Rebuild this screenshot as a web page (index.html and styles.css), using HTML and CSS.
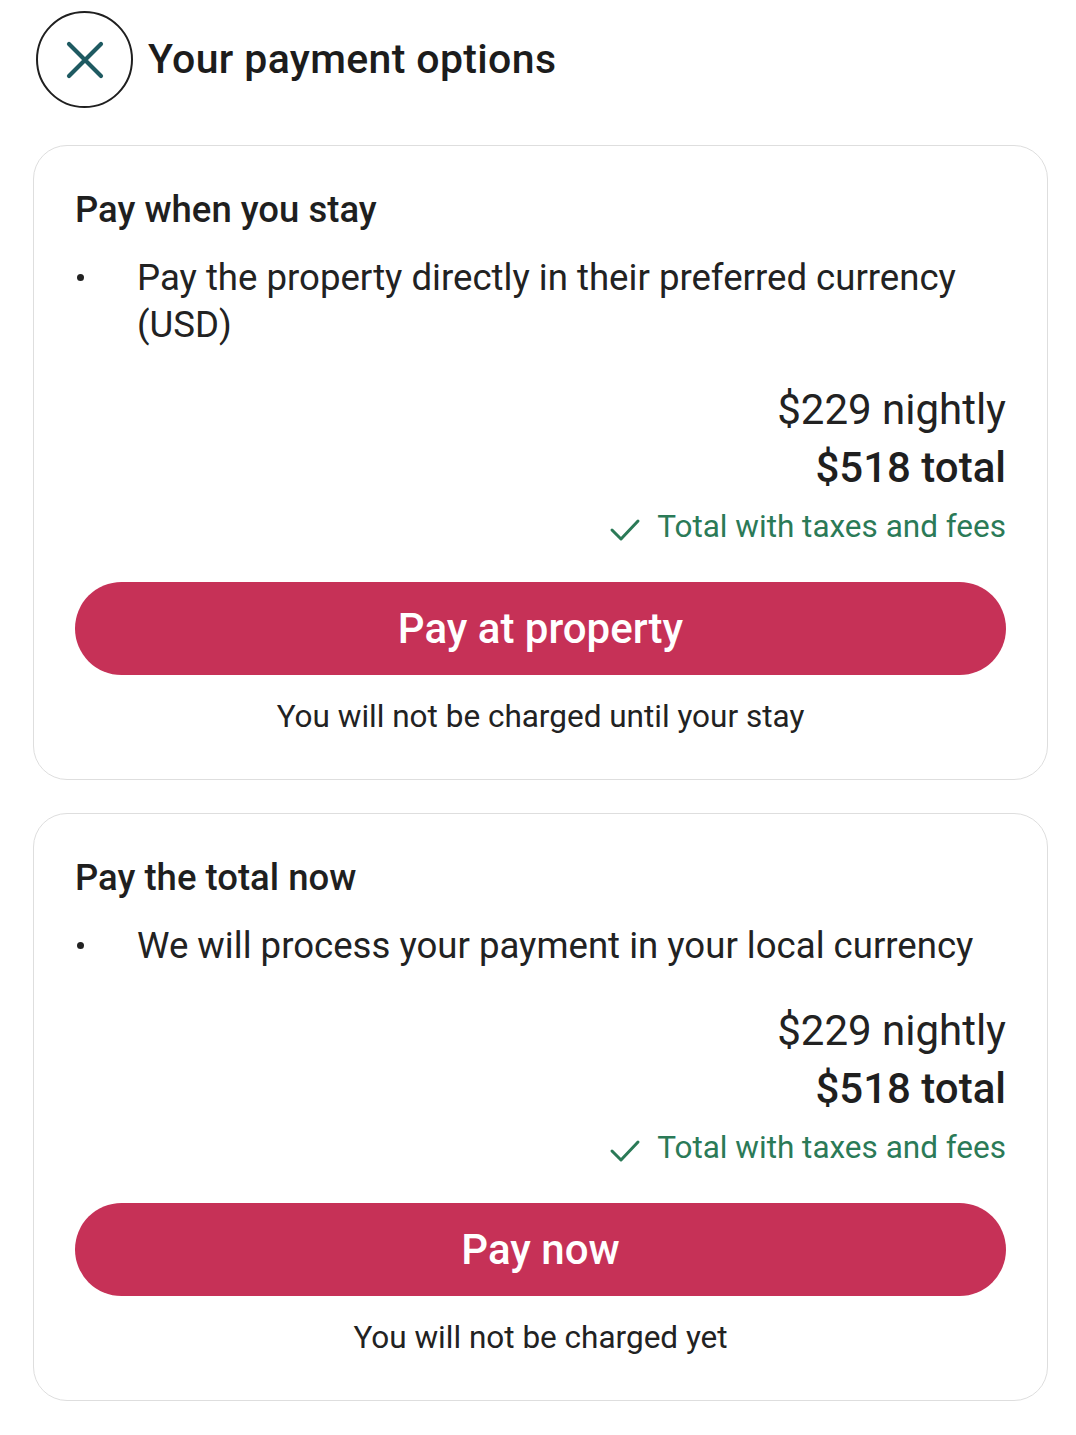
FILE: index.html
```html
<!DOCTYPE html>
<html lang="en">
<head>
  <meta charset="UTF-8" />
  <meta name="viewport" content="width=device-width, initial-scale=1" />
  <title>Your payment options</title>
  <link rel="stylesheet" href="styles.css">
</head>
<body>
  <div class="header">
    <button class="close-btn" aria-label="Close">
      <svg width="40" height="40" viewBox="0 0 40 40">
        <path d="M4 4 L36 36 M36 4 L4 36" stroke="#1e5a61" stroke-width="4.2" stroke-linecap="round" fill="none"/>
      </svg>
    </button>
    <h1>Your payment options</h1>
  </div>

  <!-- Opcao 1 -->
  <div class="card">
    <h2>Pay when you stay</h2>
    <div class="bullet">
      <span class="dot"></span>
      <p>Pay the property directly in their preferred currency (USD)</p>
    </div>
    <div class="price">
      <div class="nightly">$229 nightly</div>
      <div class="total">$518 total</div>
      <div class="taxes">
        <svg width="32" height="26" viewBox="0 0 32 26">
          <path d="M3 13 L12 22 L29 4" stroke="#2b7a57" stroke-width="3" fill="none" stroke-linecap="round" stroke-linejoin="round"/>
        </svg>
        <span>Total with taxes and fees</span>
      </div>
    </div>
    <a href="#" class="button">Pay at property</a>
    <div class="note">You will not be charged until your stay</div>
  </div>

  <!-- Opcao 2 -->
  <div class="card">
    <h2>Pay the total now</h2>
    <div class="bullet">
      <span class="dot"></span>
      <p>We will process your payment in your local currency</p>
    </div>
    <div class="price">
      <div class="nightly">$229 nightly</div>
      <div class="total">$518 total</div>
      <div class="taxes">
        <svg width="32" height="26" viewBox="0 0 32 26">
          <path d="M3 13 L12 22 L29 4" stroke="#2b7a57" stroke-width="3" fill="none" stroke-linecap="round" stroke-linejoin="round"/>
        </svg>
        <span>Total with taxes and fees</span>
      </div>
    </div>
    <a href="#" class="button">Pay now</a>
    <div class="note">You will not be charged yet</div>
  </div>
</body>
</html>
```

FILE: styles.css
```css
body {
  margin: 0;
  padding: 11px 28px 30px 33px;
  background: #fff;
  font-family: Roboto, 'Noto Sans', Arial, sans-serif;
  color: #1f1f1f;
}
.header {
  display: flex;
  align-items: center;
  gap: 15px;
  padding-left: 3px;
  margin-bottom: 37px;
}
.close-btn {
  width: 97px;
  height: 97px;
  border-radius: 50%;
  border: 2px solid #1f1f1f;
  background: #fff;
  display: flex;
  align-items: center;
  justify-content: center;
  padding: 0;
  flex-shrink: 0;
}
h1 {
  margin: 0;
  font-size: 41px;
  letter-spacing: 0.35px;
  font-weight: 500;
  color: #1c1c1c;
  padding-bottom: 2px;
}
.card {
  border: 1.5px solid #dedede;
  border-radius: 34px;
  padding: 44px 41px 42px 41px;
  margin-bottom: 33px;
}
h2 {
  margin: 0;
  font-size: 36.5px;
  line-height: 40px;
  font-weight: 500;
  color: #1f1f1f;
}
.bullet {
  display: flex;
  margin-top: 24px;
}
.dot {
  flex-shrink: 0;
  width: 7px;
  height: 7px;
  border-radius: 50%;
  background: #222;
  margin: 20px 53px 0 2px;
}
.bullet p {
  margin: 0;
  font-size: 36.6px;
  line-height: 47px;
  color: #222;
}
.price {
  text-align: right;
  margin-top: 33px;
}
.nightly {
  font-size: 42px;
  line-height: 58px;
  color: #222;
}
.total {
  font-size: 42px;
  line-height: 58px;
  font-weight: 500;
  color: #1f1f1f;
}
.taxes {
  display: flex;
  justify-content: flex-end;
  align-items: center;
  gap: 16px;
  margin-top: 8px;
  font-size: 31.5px;
  line-height: 44px;
  color: #2b7a57;
}
.taxes svg {
  margin-top: 6px;
}
.button {
  display: flex;
  align-items: center;
  justify-content: center;
  height: 93px;
  margin-top: 33px;
  background-color: #c63157;
  color: #fff;
  border-radius: 47px;
  text-decoration: none;
  font-size: 42px;
  font-weight: 500;
}
.note {
  text-align: center;
  margin-top: 22px;
  font-size: 31.5px;
  line-height: 40px;
  color: #222;
}
```
